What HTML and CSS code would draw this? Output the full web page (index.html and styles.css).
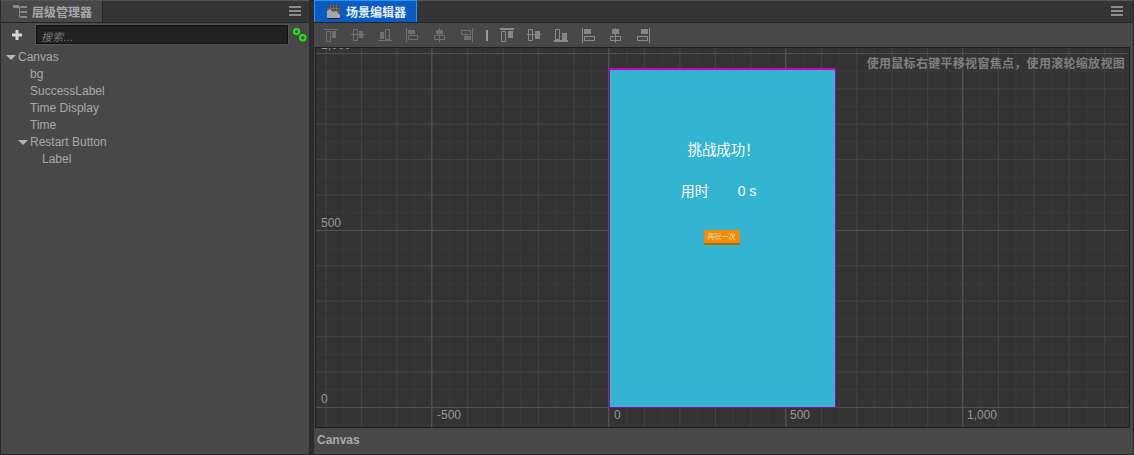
FILE: index.html
```html
<!DOCTYPE html>
<html lang="zh">
<head>
<meta charset="utf-8">
<title>Editor</title>
<link rel="stylesheet" href="styles.css">
</head>
<body>
<div class="app">
  <section class="panel hierarchy">
    <header class="tabbar">
      <div class="tab">
        <svg class="tab-icon" width="14" height="14" viewBox="0 0 14 14"><path d="M0 0h6v3H0zM8 1h6v2H8zM8 6h6v2H8zM8 11h6v2H8z" fill="#8a8a8a"/><path d="M6.500 2v10M6 2h2M6 7h2M6 12h2" stroke="#8a8a8a" fill="none"/></svg>
        <span>层级管理器</span>
      </div>
      <svg class="menu" width="12" height="10" viewBox="0 0 12 10"><path d="M0 1h12M0 5h12M0 9h12" stroke="#8c8c8c" stroke-width="2"/></svg>
    </header>
    <div class="searchrow">
      <svg class="plus" width="10" height="10" viewBox="0 0 10 10"><path d="M5 0v10M0 5h10" stroke="#d6d6d6" stroke-width="3"/></svg>
      <div class="search">搜索...</div>
      <svg class="link" width="14" height="14" viewBox="0 0 14 14"><circle cx="3.500" cy="3.500" r="2.600" stroke="#1fe80e" stroke-width="2" fill="none"/><circle cx="9.800" cy="9.800" r="2.800" stroke="#1fe80e" stroke-width="2" fill="none"/></svg>
    </div>
    <ul class="tree">
      <li class="node"><i class="arrow"></i>Canvas</li>
      <li class="node d1">bg</li>
      <li class="node d1">SuccessLabel</li>
      <li class="node d1">Time Display</li>
      <li class="node d1">Time</li>
      <li class="node d1"><i class="arrow"></i>Restart Button</li>
      <li class="node d2">Label</li>
    </ul>
  </section>
  <section class="panel scene">
    <header class="tabbar">
      <div class="tab active">
        <svg class="tab-icon" width="13" height="14" viewBox="0 0 13 14"><rect width="13" height="13" fill="#4c4c4c"/><path d="M0 3.500h13M0 6.500h13M3.500 0v6M6.500 0v6M9.500 0v6" stroke="#6a6a6a"/><path d="M0 13V6l3-2 3 3 3-1 4 4v3z" fill="#a8a8a8"/><path d="M0 13.500h13" stroke="#222"/></svg>
        <span>场景编辑器</span>
      </div>
      <svg class="menu" width="12" height="10" viewBox="0 0 12 10"><path d="M0 1h12M0 5h12M0 9h12" stroke="#8c8c8c" stroke-width="2"/></svg>
    </header>
    <div class="toolbar">
      <svg class="tools" width="328" height="16" viewBox="0 0 328 16">
        <g class="dim">
          <path d="M0 1.500h14M2.500 3.500h4v10h-4z"/><path class="solid" d="M8 3h4v7H8z"/>
          <path d="M27 6.500h14M29.500 1.500h4v11h-4z"/><path class="solid" d="M35 3h4v7h-4z"/>
          <path d="M54 12.500h14M61.500 1.500h4v10h-4z"/><path class="solid" d="M56 4h4v7h-4z"/>
          <path d="M82.500 0v14M84.500 7.500h9v4h-9z"/><path class="solid" d="M84 2h7v4h-7z"/>
          <path d="M115.500 0v14M110.500 7.500h10v4h-10z"/><path class="solid" d="M112 2h7v4h-7z"/>
          <path d="M148.500 0v14M137.500 2.500h9v4h-9z"/><path class="solid" d="M140 8h7v4h-7z"/>
        </g>
        <path class="sep" d="M162 2h2v11h-2z"/>
        <g class="bright">
          <path class="thick" d="M176 1h14"/><path d="M177.500 3.500h4v10h-4z"/><path class="solid" d="M184 3h5v7h-5z"/>
          <path d="M203 6.500h14M204.500 1.500h4v11h-4z"/><path class="solid" d="M211 3h5v8h-5z"/>
          <path class="thick" d="M230 13h14"/><path d="M231.500 1.500h4v10h-4z"/><path class="solid" d="M238 5h5v7h-5z"/>
          <path d="M258.500 0v15M260.500 8.500h10v4h-10z"/><path class="solid" d="M260 1h7v5h-7z"/>
          <path d="M291.500 0v15M286.500 8.500h10v4h-10z"/><path class="solid" d="M288 1h7v5h-7z"/>
          <path d="M325.500 0v15M313.500 8.500h10v4h-10z"/><path class="solid" d="M317 1h7v5h-7z"/>
        </g>
      </svg>
    </div>
    <div class="viewport">
      <span class="hint">使用鼠标右键平移视窗焦点，使用滚轮缩放视图</span>
      <span class="tick y y1000">1,000</span>
      <span class="tick y y500">500</span>
      <span class="tick y y0">0</span>
      <span class="tick x xm500">-500</span>
      <span class="tick x x0">0</span>
      <span class="tick x x500">500</span>
      <span class="tick x x1000">1,000</span>
      <div class="stage">
        <div class="title">挑战成功！</div>
        <div class="time"><span>用时</span><span class="num">0 s</span></div>
        <div class="btn">再玩一次</div>
      </div>
    </div>
    <footer class="status">Canvas</footer>
  </section>
</div>
</body>
</html>
```
FILE: styles.css
```css
* { box-sizing: border-box; }
html, body { margin: 0; height: 100%; }
body {
  background: #2b2b2b;
  color: #a8a8a8;
  font: 12px "Liberation Sans", "Noto Sans CJK SC", sans-serif;
  overflow: hidden;
}
.app { display: flex; gap: 3px; width: 1134px; height: 455px; }
.panel {
  display: flex;
  flex-direction: column;
  background: #484848;
  border: 1px solid #2a2a2a;
  border-top: 0;
}
.hierarchy { width: 310px; }
.scene { width: 821px; }
.tabbar {
  flex: none;
  height: 23px;
  display: flex;
  align-items: flex-start;
  justify-content: space-between;
  background: #353535;
  border-top: 1px solid #555;
  border-bottom: 1px solid #262626;
}
.tab {
  display: flex;
  align-items: center;
  gap: 5px;
  height: 22px;
  width: 102px;
  margin-top: -1px;
  padding-left: 12px;
  background: #484848;
  border-right: 1px solid #262626;
  border-top: 1px solid #555;
  font-weight: bold;
  color: #a8a8a8;
}
.tab.active {
  width: 103px;
  gap: 6px;
  background: #0a5cc2;
  color: #e6eef8;
  border: 1px solid #2196f3;
  border-bottom: 0;
}
.menu { margin: 5px 8px 0 0; }
.scene .menu { margin-right: 10px; }
.searchrow {
  flex: none;
  height: 23px;
  display: flex;
  align-items: center;
  padding-left: 11px;
}
.plus { flex: none; }
.search {
  flex: none;
  width: 252px;
  height: 19px;
  margin-left: 14px;
  padding: 2px 4px;
  background: #212121;
  border: 1px solid #0f0f0f;
  box-shadow: 0 0 0 1px #555;
  color: #777;
  font-style: italic;
  font-size: 11px;
  letter-spacing: .3px;
}
.link { flex: none; margin-left: 5px; }
.tree { list-style: none; margin: 3px 0 0; padding: 0; }
.node { height: 17px; line-height: 17px; padding-left: 17px; position: relative; color: #a8a8a8; }
.d1 { padding-left: 29px; }
.d2 { padding-left: 41px; }
.arrow {
  position: absolute;
  margin-left: -12px;
  top: 6px;
  border-left: 5px solid transparent;
  border-right: 5px solid transparent;
  border-top: 5px solid #b4b4b4;
}
.toolbar {
  flex: none;
  height: 24px;
  padding: 5px 0 0 10px;
  background: #484848;
}
.tools { display: block; }
.tools .dim { stroke: #707070; fill: none; }
.tools .bright { stroke: #8a8a8a; fill: none; }
.tools .dim .solid { fill: #707070; stroke: none; }
.tools .bright .solid { fill: #858585; stroke: none; }
.tools .thick { stroke-width: 2; }
.tools .sep { fill: #9a9a9a; }
.viewport {
  flex: 1;
  margin: 0 3px 0 1px;
  position: relative;
  overflow: hidden;
  border: 1px solid #1e1e1e;
  background-color: #333;
  background-image:
    linear-gradient(90deg, #505050 1px, transparent 1px),
    linear-gradient(#505050 1px, transparent 1px),
    linear-gradient(90deg, #424242 1px, transparent 1px),
    linear-gradient(#424242 1px, transparent 1px),
    linear-gradient(90deg, #3a3a3a 1px, transparent 1px),
    linear-gradient(#3a3a3a 1px, transparent 1px);
  background-size: 177px 100%, 100% 177px, 35.4px 100%, 100% 35.4px, 17.7px 100%, 100% 17.7px;
  background-position: 115px 0, 0 5px, 9.6px 0, 0 5px, 9.6px 0, 0 5px;
}
.hint {
  position: absolute;
  right: 4px;
  top: 6px;
  font-weight: bold;
  letter-spacing: .3px;
  color: #808080;
  white-space: nowrap;
}
.tick { position: absolute; color: #999; line-height: 14px; }
.y { left: 5px; }
.y1000 { top: -10px; }
.y500 { top: 168px; }
.y0 { top: 344px; }
.x { top: 360px; }
.xm500 { left: 121px; }
.x0 { left: 298px; }
.x500 { left: 474px; }
.x1000 { left: 651px; }
.stage {
  position: absolute;
  left: 293px;
  top: 20px;
  width: 227px;
  height: 340px;
  background: #33b4d0;
  border: 1px solid #a000b0;
  border-top: 2px solid #d000c0;
  color: #fff;
  display: flex;
  flex-direction: column;
  align-items: center;
}
.title { margin-top: 71px; margin-left: 2px; font-size: 14.4px; line-height: 18px; }
.time { margin-top: 23px; margin-left: -8px; font-size: 14px; line-height: 18px; display: flex; gap: 29px; }
.btn {
  margin-top: 30px;
  margin-left: -2px;
  width: 36px;
  height: 15px;
  background: #ee8c06;
  border-bottom: 2px solid #a96b12;
  border-radius: 1px;
  color: #f6ddc0;
  font-size: 7px;
  line-height: 13px;
  text-align: center;
  white-space: nowrap;
}
.status {
  flex: none;
  height: 26px;
  padding: 5px 3px;
  font-weight: bold;
  color: #a8a8a8;
}
```
